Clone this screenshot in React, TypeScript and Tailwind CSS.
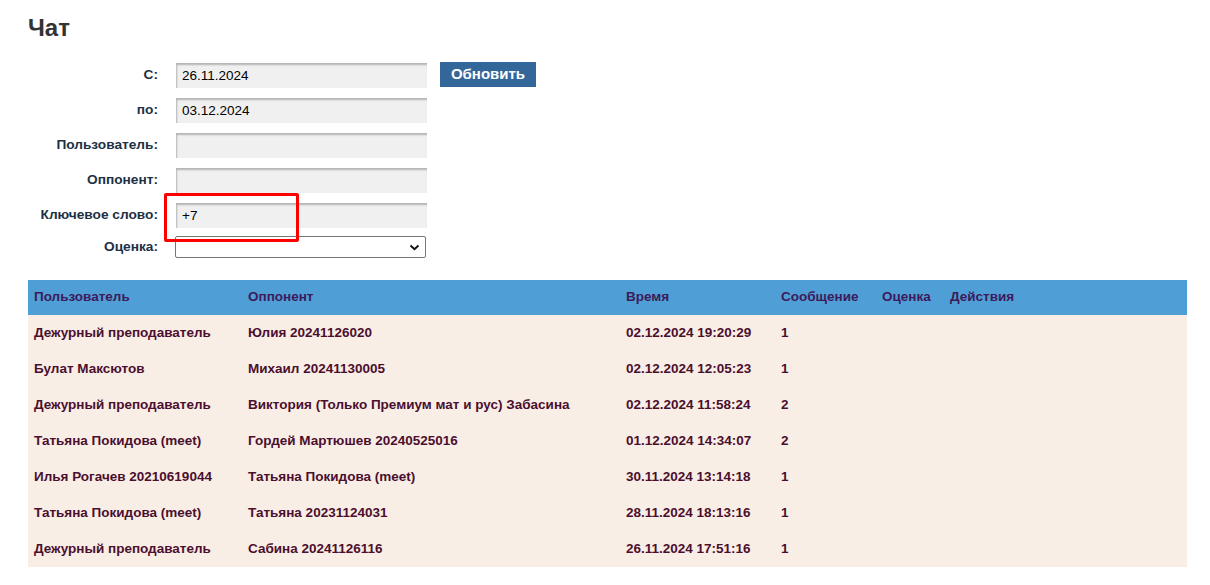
import React from "react";

const rows = [
  ["Дежурный преподаватель", "Юлия 20241126020", "02.12.2024 19:20:29", "1"],
  ["Булат Максютов", "Михаил 20241130005", "02.12.2024 12:05:23", "1"],
  ["Дежурный преподаватель", "Виктория (Только Премиум мат и рус) Забасина", "02.12.2024 11:58:24", "2"],
  ["Татьяна Покидова (meet)", "Гордей Мартюшев 20240525016", "01.12.2024 14:34:07", "2"],
  ["Илья Рогачев 20210619044", "Татьяна Покидова (meet)", "30.11.2024 13:14:18", "1"],
  ["Татьяна Покидова (meet)", "Татьяна 20231124031", "28.11.2024 18:13:16", "1"],
  ["Дежурный преподаватель", "Сабина 20241126116", "26.11.2024 17:51:16", "1"],
];

function Field({ label, value }: { label: string; value?: string }) {
  return (
    <div className="flex items-center h-[35px]">
      <label className="w-[130px] text-right text-[13.7px] font-bold text-[#1c3144]">{label}</label>
      <input
        readOnly
        value={value ?? ""}
        className="ml-[18px] w-[251px] h-[25px] bg-[#f0f0f0] px-[6px] text-[13.5px] text-black shadow-[inset_1px_2px_2px_rgba(0,0,0,0.25)] outline-none"
      />
    </div>
  );
}

export default function App() {
  return (
    <div className="min-h-screen bg-white pl-[28px] pr-[23px] pt-[13px] font-['Liberation_Sans',Arial,sans-serif]">
      <h1 className="text-[24px] font-bold text-[#333333] leading-[30px]">Чат</h1>

      <div className="relative mt-[15px] flex items-start">
        <div>
          <Field label="С:" value="26.11.2024" />
          <Field label="по:" value="03.12.2024" />
          <Field label="Пользователь:" />
          <Field label="Оппонент:" />
          <Field label="Ключевое слово:" value="+7" />
          <div className="flex items-start h-[31px] pt-[3px]">
            <label className="w-[130px] text-right text-[13.7px] leading-[22px] font-bold text-[#1c3144]">Оценка:</label>
            <div className="ml-[17px] w-[251px] h-[22px] border border-[#767676] rounded-[2px] bg-white flex items-center justify-end pr-[5px]">
              <svg width="11" height="7" viewBox="0 0 11 7" fill="none">
                <path d="M1.5 1.5 L5.5 5.2 L9.5 1.5" stroke="#111" strokeWidth="2" />
              </svg>
            </div>
          </div>
        </div>
        <button className="ml-[13px] mt-[4px] h-[25px] w-[96px] bg-[#336699] text-white text-[15px] font-bold">
          Обновить
        </button>
        <div className="absolute left-[136px] top-[135px] w-[135px] h-[49px] border-[3px] border-[#ff0000] rounded-[2px] pointer-events-none" />
      </div>

      <table className="mt-[16px] w-full border-collapse table-fixed text-[13.5px] font-bold">
        <colgroup>
          <col className="w-[214px]" />
          <col className="w-[378px]" />
          <col className="w-[155px]" />
          <col className="w-[101px]" />
          <col className="w-[68px]" />
          <col />
        </colgroup>
        <thead>
          <tr className="bg-[#4f9fd6] h-[35px] text-[#3d1a5b]">
            {["Пользователь", "Оппонент", "Время", "Сообщение", "Оценка", "Действия"].map((h) => (
              <th key={h} className="text-left font-bold pl-[6px]">{h}</th>
            ))}
          </tr>
        </thead>
        <tbody>
          {rows.map((r, i) => (
            <tr key={i} className="bg-[#f9eee6] h-[36px] text-[#4b0f2e]">
              <td className="pl-[6px]">{r[0]}</td>
              <td className="pl-[6px]">{r[1]}</td>
              <td className="pl-[6px]">{r[2]}</td>
              <td className="pl-[6px]">{r[3]}</td>
              <td></td>
              <td></td>
            </tr>
          ))}
        </tbody>
      </table>
    </div>
  );
}
